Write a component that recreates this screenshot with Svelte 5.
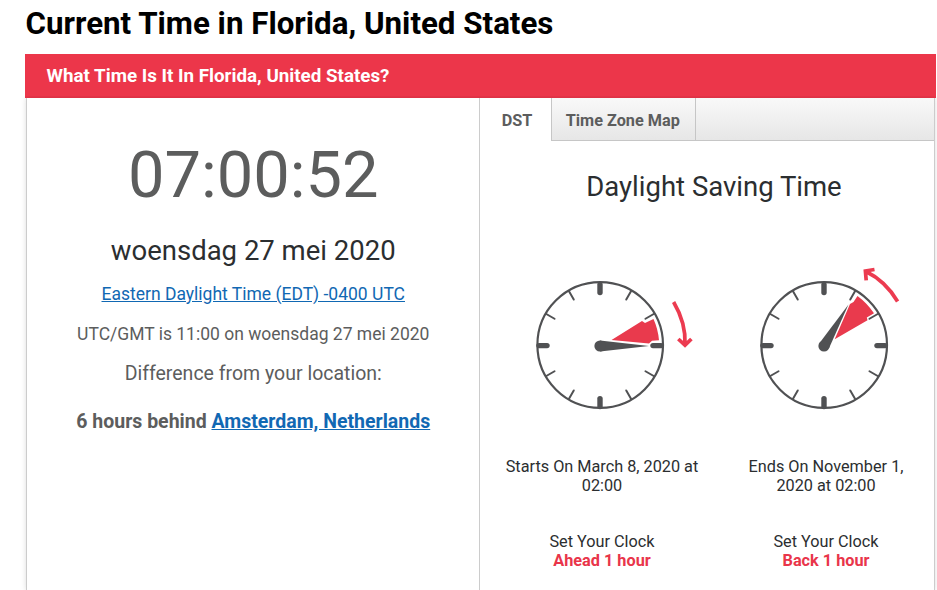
<script lang="ts">
	const tabs = ['DST', 'Time Zone Map'];
	let activeTab = $state('DST');

	const minorTicks = [30, 60, 120, 150, 210, 240, 300, 330];
	const majorTicks = [0, 90, 180, 270];

	const changes = [
		{
			text: 'Starts On March 8, 2020 at 02:00',
			action: 'Ahead 1 hour',
			wedge: 'M11.5 -5 L42 -24 L45 -22 L53.5 -26 Q58 -16 59 -4.7 L52 -4.2 L49 -1.5 Z',
			hand: 'M0 -4.6 L49 1 L0 6.6 Z',
			arrow: 'M73.6 -43 Q86 -22 85 -0.5 M78.3 -6 L85 0.2 L91.4 -6'
		},
		{
			text: 'Ends On November 1, 2020 at 02:00',
			action: 'Back 1 hour',
			wedge: 'M10.7 -5.7 L26 -41 L29.5 -43 L33.5 -49 Q43 -42 50 -31.7 L42.8 -27.5 L43.5 -24.7 Z',
			hand: 'M-4.8 -1.5 L24.5 -40.5 L4.9 3.5 Z',
			arrow: 'M73.6 -43.5 Q61.5 -64 42 -73.5 M50.5 -75.5 L41.4 -74 L42.2 -64.7'
		}
	];
</script>

<h1>Current Time in Florida, United States</h1>

<section>
	<h2>What Time Is It In Florida, United States?</h2>
	<div class="content">
		<div class="current">
			<div class="time">07:00:52</div>
			<div class="date">woensdag 27 mei 2020</div>
			<a class="zone" href="#zone">Eastern Daylight Time (EDT) -0400 UTC</a>
			<p class="utc">UTC/GMT is 11:00 on woensdag 27 mei 2020</p>
			<p class="difference">Difference from your location:</p>
			<p class="behind">6 hours behind <a href="#amsterdam">Amsterdam, Netherlands</a></p>
		</div>

		<div class="panel">
			<div class="tabs">
				{#each tabs as tab}
					<button class:active={activeTab === tab} onclick={() => (activeTab = tab)}>{tab}</button>
				{/each}
			</div>
			<div class="dst">
				<h3>Daylight Saving Time</h3>
				<div class="clocks">
					{#each changes as { text, action, wedge, hand, arrow }}
						<div class="change">
							<svg viewBox="-96 -85 196 160" width="196" height="160">
								<circle class="face" cx="0.2" cy="0" r="62.8" />
								{#each minorTicks as angle}
									<path class="minor" d="M0 -62 V-52.5" transform="rotate({angle})" />
								{/each}
								{#each majorTicks as angle}
									<path class="major" d="M0 -61 V-53" transform="translate(0 0.6) rotate({angle})" />
								{/each}
								<path class="wedge" d={wedge} />
								<path class="hand" d={hand} />
								<circle class="hand" cx="0" cy="1" r="5.6" />
								<path class="arrow" d={arrow} />
							</svg>
							<p class="when">{text}</p>
							<p class="set">Set Your Clock<br /><strong>{action}</strong></p>
						</div>
					{/each}
				</div>
			</div>
		</div>
	</div>
</section>

<style>
	:global(body) {
		margin: 0;
		background: #fff;
		color: #5c5d5d;
		font-family: Roboto, sans-serif;
		overflow: hidden;
	}

	h1,
	h2,
	h3,
	p {
		margin: 0;
	}

	h1 {
		padding-left: 25.5px;
		height: 54px;
		color: #000;
		font-size: 31.3px;
		font-weight: 700;
		line-height: 47px;
		box-sizing: border-box;
		white-space: nowrap;
	}

	section {
		width: 911px;
		margin-left: 25px;
	}

	h2 {
		height: 44px;
		padding-left: 21.5px;
		background: #ec364a;
		color: #fff;
		font-size: 18.8px;
		font-weight: 700;
		line-height: 44px;
	}

	.content {
		display: flex;
		box-sizing: border-box;
		width: 909px;
		height: 492px;
		margin-left: 1px;
		border: solid #ccc;
		border-width: 0 1px;
		box-shadow: 0 0 5px rgba(0, 0, 0, 0.14);
		clip-path: inset(-2px -6px 0);
	}

	.current {
		box-sizing: border-box;
		width: 452px;
		padding-left: 0.5px;
		text-align: center;
	}

	.time {
		margin-top: 39px;
		font-size: 65px;
		line-height: 76px;
	}

	.date {
		margin-top: 21px;
		color: #2b2e30;
		font-size: 27.5px;
		line-height: 34px;
	}

	a {
		color: #1168b3;
	}

	.zone {
		display: block;
		margin-top: 15px;
		font-size: 17.5px;
		line-height: 22px;
	}

	.utc {
		margin-top: 18px;
		font-size: 17.5px;
		line-height: 22px;
	}

	.difference {
		margin-top: 17px;
		font-size: 19.5px;
		line-height: 24px;
	}

	.behind {
		margin-top: 24px;
		font-size: 19.5px;
		font-weight: 700;
		line-height: 24px;
	}

	.panel {
		flex: 1;
		border-left: 1px solid #ccc;
	}

	.tabs {
		display: flex;
		height: 43px;
		background: linear-gradient(#f9f9f9, #e6e6e6);
		box-shadow: inset 0 -1px #c6c6c6;
	}

	.tabs button {
		box-sizing: border-box;
		width: 144px;
		padding: 1px 1.5px 0 0;
		border: 0;
		border-right: 1px solid #c6c6c6;
		background: none;
		color: #5c5d5d;
		font: 700 16.25px/44px Roboto, sans-serif;
		cursor: pointer;
	}

	.tabs button.active {
		width: 72px;
		padding: 1px 0 0 3px;
		background: #fff;
	}

	.dst {
		width: 420px;
		margin-left: 24px;
		color: #2b2e30;
		text-align: center;
	}

	h3 {
		padding-top: 28px;
		font-size: 27.5px;
		font-weight: 400;
		line-height: 36px;
	}

	.clocks {
		display: flex;
		gap: 28px;
		margin-top: 55px;
	}

	.change {
		width: 196px;
		font-size: 16.25px;
		line-height: 19px;
	}

	svg {
		display: block;
	}

	.face {
		fill: none;
		stroke: #505153;
		stroke-width: 2.2;
	}

	.minor {
		stroke: #505153;
		stroke-width: 2;
		stroke-linecap: round;
	}

	.major {
		stroke: #505153;
		stroke-width: 5.4;
		stroke-linecap: round;
	}

	.wedge {
		fill: #e93a4d;
	}

	.hand {
		fill: #505153;
	}

	.arrow {
		fill: none;
		stroke: #ec3b50;
		stroke-width: 3.7;
	}

	.when {
		margin-top: 37px;
		padding: 0 1px;
	}

	.set {
		margin-top: 37px;
	}

	.set strong {
		color: #e9354a;
	}
</style>
